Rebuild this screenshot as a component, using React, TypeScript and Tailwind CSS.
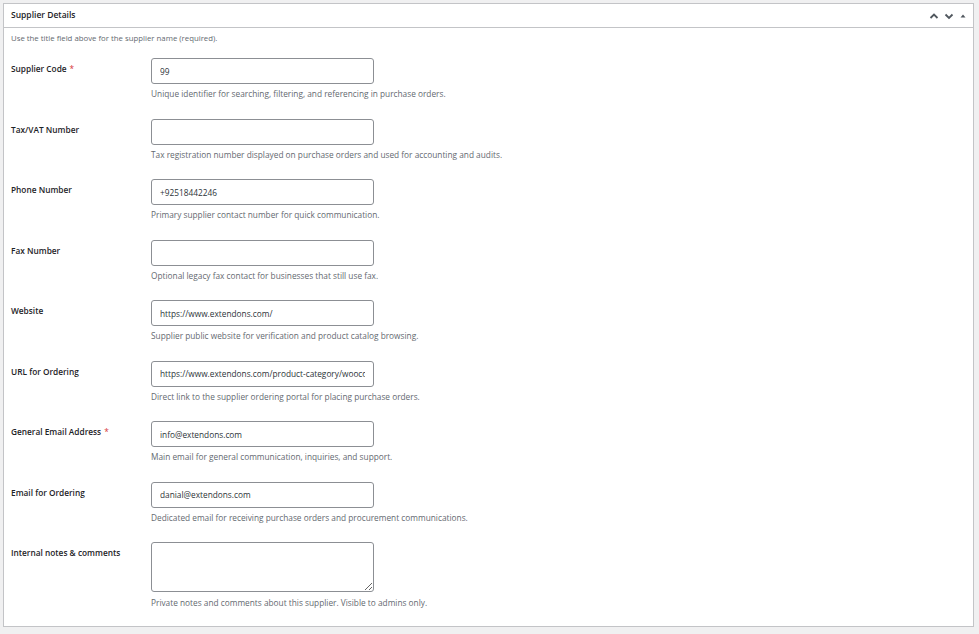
import React from "react";

type Field = {
  label: string;
  required?: boolean;
  value?: string;
  help: string;
  multiline?: boolean;
};

const fields: Field[] = [
  { label: "Supplier Code", required: true, value: "99", help: "Unique identifier for searching, filtering, and referencing in purchase orders." },
  { label: "Tax/VAT Number", value: "", help: "Tax registration number displayed on purchase orders and used for accounting and audits." },
  { label: "Phone Number", value: "+92518442246", help: "Primary supplier contact number for quick communication." },
  { label: "Fax Number", value: "", help: "Optional legacy fax contact for businesses that still use fax." },
  { label: "Website", value: "https://www.extendons.com/", help: "Supplier public website for verification and product catalog browsing." },
  { label: "URL for Ordering", value: "https://www.extendons.com/product-category/woocommerce-plugins/", help: "Direct link to the supplier ordering portal for placing purchase orders." },
  { label: "General Email Address", required: true, value: "info@extendons.com", help: "Main email for general communication, inquiries, and support." },
  { label: "Email for Ordering", value: "danial@extendons.com", help: "Dedicated email for receiving purchase orders and procurement communications." },
  { label: "Internal notes & comments", multiline: true, help: "Private notes and comments about this supplier. Visible to admins only." },
];

function HeaderIcons() {
  return (
    <div className="flex items-center gap-[5px] text-[#50575e]">
      <svg width="10" height="10" viewBox="0 0 10 10" fill="none" stroke="currentColor" strokeWidth="1.8">
        <path d="M1.5 7 L5 3.5 L8.5 7" />
      </svg>
      <svg width="10" height="10" viewBox="0 0 10 10" fill="none" stroke="currentColor" strokeWidth="1.8">
        <path d="M1.5 3.5 L5 7 L8.5 3.5" />
      </svg>
      <svg width="8" height="10" viewBox="0 0 8 10" fill="currentColor">
        <path d="M1.5 6.5 L4 3.5 L6.5 6.5 Z" />
      </svg>
    </div>
  );
}

function FieldRow({ f, last }: { f: Field; last: boolean }) {
  return (
    <div className={`flex ${last ? "pb-[17px]" : "pb-[18.5px]"}`}>
      <div className="w-[140px] shrink-0 pt-[5px] text-[8.3px] leading-[12px] font-semibold text-[#1d2327]">
        {f.label}
        {f.required && <span className="ml-[3px] font-normal text-[#d63638]">*</span>}
      </div>
      <div className="flex flex-col">
        {f.multiline ? (
          <textarea
            className="block w-[223px] h-[50px] rounded-[3px] border border-[#8c8f94] bg-white px-2 py-1 text-[8.3px] text-[#2c3338] outline-none"
            defaultValue=""
          />
        ) : (
          <input
            className="block w-[223px] h-[26px] rounded-[3px] border border-[#8c8f94] bg-white px-2 text-[8.3px] text-[#2c3338] outline-none"
            defaultValue={f.value}
          />
        )}
        <p className={`${f.multiline ? "mt-[5px]" : "mt-[4px]"} text-[8.3px] leading-[12px] text-[#646970]`}>{f.help}</p>
      </div>
    </div>
  );
}

export default function App() {
  return (
    <div
      className="min-h-[634px] w-[979px] bg-[#f0f0f1] pt-[3px] pl-[3px]"
      style={{ fontFamily: '"Open Sans", "Noto Sans", sans-serif' }}
    >
      <div className="w-[971px] border border-[#c3c4c7] bg-white">
        <div className="flex h-[24px] items-center justify-between border-b border-[#c3c4c7] pl-[7px] pr-[6px]">
          <h2 className="text-[8.5px] font-semibold text-[#1d2327]">Supplier Details</h2>
          <HeaderIcons />
        </div>
        <div className="pl-[7px] pt-[4px]">
          <p className="text-[7.8px] leading-[12px] text-[#646970]">Use the title field above for the supplier name (required).</p>
          <div className="mt-[14px]">
            {fields.map((f, i) => (
              <FieldRow key={f.label} f={f} last={i === fields.length - 1} />
            ))}
          </div>
        </div>
      </div>
    </div>
  );
}
